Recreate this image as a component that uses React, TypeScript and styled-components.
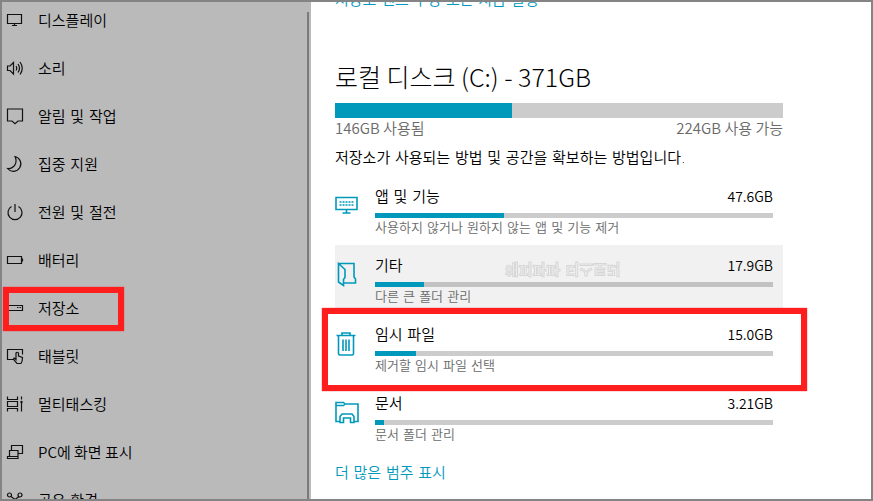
import React from "react";
import styled, { createGlobalStyle } from "styled-components";

const accent = "#0099bc";
const latin = `"Noto Sans CJK KR", sans-serif`;
const hangul = `"DejaVu Sans", "Noto Sans CJK KR", sans-serif`;

const GlobalStyle = createGlobalStyle`
  * { box-sizing: border-box; }
  body {
    margin: 0;
    background: #fff;
    color: #000;
    font: 350 15px/20px ${hangul};
  }
`;

const Frame = styled.div`
  display: flex;
  height: 100vh;
  border: 2px solid #848484;
  overflow: hidden;
`;

const Sidebar = styled.nav`
  display: flex;
  flex: 0 0 309px;
  background: #bababa;
  overflow: hidden;
`;

const NavList = styled.ul`
  flex: 1;
  margin: -6px 0 0;
  padding: 0;
  list-style: none;
`;

const NavItem = styled.li`
  position: relative;
`;

const NavLink = styled.a`
  display: flex;
  align-items: center;
  gap: 14px;
  height: 48px;
  padding-left: 4px;
  color: #000;
  text-decoration: none;
`;

const NavLabel = styled.span<{ $latin?: boolean }>`
  padding-top: ${(p) => (p.$latin ? 0 : 2)}px;
  font-family: ${(p) => (p.$latin ? latin : hangul)};
`;

const Scrollbar = styled.div`
  flex: 0 0 2px;
  margin: 10px 2px 0 0;
  background: #7a7a7a;
`;

const NavIcon = styled.svg`
  width: 18px;
  height: 18px;
  fill: none;
  stroke: #111;
  stroke-width: 1.2;
`;

const Highlight = styled.div`
  position: absolute;
  border: 6px solid #ff1e1e;
  box-shadow: 0 0 1px #ff1e1e;
  pointer-events: none;
`;

const NavHighlight = styled(Highlight)`
  top: 3px;
  left: 1px;
  width: 121px;
  height: 44px;
`;

const RowHighlight = styled(Highlight)`
  inset: -6px -24px -8px -13px;
`;

const Main = styled.main`
  flex: 1;
  min-width: 0;
  padding: 0 88px 0 24px;
  background: #fff;
  overflow: hidden;
`;

const TextLink = styled.a`
  display: block;
  width: fit-content;
  color: ${accent};
  line-height: 20px;
  text-decoration: none;
`;

const TopLink = styled(TextLink)`
  margin-top: -12px;
`;

const Title = styled.h1`
  margin: 48px 0 0;
  font-family: ${latin};
  font-size: 25px;
  font-weight: 300;
  line-height: 36px;
`;

const Bar = styled.div<{ $size: number; $dark?: boolean }>`
  height: ${(p) => p.$size}px;
  background: ${(p) => (p.$dark ? "#c2c2c2" : "#ccc")};
`;

const Fill = styled.div`
  height: 100%;
  background: ${accent};
`;

const DiskBar = styled(Bar)`
  margin-top: 9px;
`;

const Legend = styled.div`
  display: flex;
  justify-content: space-between;
  color: #6a6a6a;
  font-family: ${latin};
`;

const Description = styled.p`
  margin: 10px 0 8px;
`;

const Categories = styled.ul`
  margin: 0;
  padding: 0;
  list-style: none;
`;

const Category = styled.li<{ $active?: boolean }>`
  position: relative;
  display: grid;
  grid-template-columns: 24px 1fr;
  column-gap: 16px;
  height: 69px;
  padding: 10px 10px 0 0;
  background: ${(p) => (p.$active ? "#f1f1f1" : "transparent")};
`;

const CategoryIcon = styled.svg`
  width: 24px;
  height: 26px;
  margin-top: 6px;
  fill: none;
  stroke: ${accent};
  stroke-width: 1.6;
`;

const CategoryHead = styled.div`
  display: flex;
  justify-content: space-between;
  margin-bottom: 5px;
`;

const CategoryName = styled.span`
  line-height: 22px;
`;

const Size = styled.span`
  font-family: ${latin};
  font-size: 14px;
`;

const Hint = styled.div`
  color: #6a6a6a;
  font-size: 13px;
  line-height: 20px;
`;

const Watermark = styled.span`
  position: absolute;
  top: 14px;
  left: 170px;
  color: #f1f1f1;
  font-weight: 700;
  -webkit-text-stroke: 1px #d6d6d6;
  transform: rotateX(180deg);
`;

const MoreLink = styled(TextLink)`
  margin-top: 11px;
`;

const navItems = [
  { label: "디스플레이", icon: <path d="M1.5 3.5h14v9h-14zM8.5 12.5v2M6 14.5h5" /> },
  { label: "소리", icon: <path d="M1.5 7v4.5H4L7.5 15V3.5L4 7zM10 7q1.5 2.2 0 4.5M12 5q3 4.2 0 8.5M14 3q4.5 6.2 0 12.5" /> },
  { label: "알림 및 작업", icon: <path d="M1.5 2h15v12H12l-3 2.7L6 14H1.5z" /> },
  { label: "집중 지원", icon: <path d="M9 1.5a7.5 7.5 0 1 1-7.5 12C8 14 12 8 9 1.5z" /> },
  { label: "전원 및 절전", icon: <path d="M9 1v8M5.5 3.5a7 7 0 1 0 7 0" /> },
  { label: "배터리", icon: <path d="M1.5 5.5h14v7h-14zM16.5 7.5v3" /> },
  { label: "저장소", icon: <path d="M1.5 6.5h15v5h-15zM11 8.5h1.5M13.5 8.5H15" />, marked: true },
  {
    label: "태블릿",
    icon: <path d="M7.5 12.5h-6v-10h15v5M10 12.5l-1.5-1.5q-1.5 0-.5 2l3 3.5h4q1.5-2 1.5-6l-4-1.5V6q-1.2-1.5-2.5 0z" />,
  },
  {
    label: "멀티태스킹",
    icon: (
      <>
        <path d="M1.5 1.5v3h10v-3M1.5 16.5v-3h10v3M1.5 6.5v5h10v-5zM15.5 1.5v3M15.5 8v8.5" />
        <circle cx="15.5" cy="7" r="1.2" fill="#111" stroke="none" />
      </>
    ),
  },
  {
    label: "PC에 화면 표시",
    latin: true,
    icon: <path d="M5.5 7.5v-5h11v8H12M3.5 13.5v-6H12v6zM1.5 13.5h10.5v2h-10.5z" />,
  },
  {
    label: "공유 환경",
    icon: (
      <>
        <circle cx="3.5" cy="4" r="2" />
        <circle cx="14" cy="4" r="2" />
        <path d="M5 5.5l4 3 4-3M9 8.5L4 13" />
      </>
    ),
  },
];

const categories = [
  {
    name: "앱 및 기능",
    size: "47.6GB",
    used: 32.4,
    hint: "사용하지 않거나 원하지 않는 앱 및 기능 제거",
    icon: (
      <>
        <path d="M1 5.5h21v12H1zM11.500 17.500v3M7.500 21h8" />
        <path d="M4.500 10h14M4.500 13h14" strokeDasharray="2 1" />
      </>
    ),
  },
  {
    name: "기타",
    size: "17.9GB",
    used: 12.3,
    hint: "다른 큰 폴더 관리",
    icon: <path d="M3.5 2.5h15.500v13.500l1.500 2v4H9M3.500 2.500v18.500l5 3.500V18.500l1.500-2V8.500L3.500 2.500z" />,
  },
  {
    name: "임시 파일",
    size: "15.0GB",
    used: 10.3,
    hint: "제거할 임시 파일 선택",
    icon: <path d="M1.5 5.500h19M7 5.500V3h8v2.500M3.500 5.500v18q0 1.500 1.500 1.500h12q1.500 0 1.500-1.500V5.500M8 9.500v11.500M11 9.500v11.500M14 9.500v11.500" />,
  },
  {
    name: "문서",
    size: "3.21GB",
    used: 2.3,
    hint: "문서 폴더 관리",
    icon: (
      <path d="M5 22.5H1V3.500h7.500l1.500 1.500h13v17.500H19M1 6.500h7.500L10 5M5 23.500v-6l2-2.500h10l2 2.500v6h-3.500V19h-7v4.500z" />
    ),
  },
];

export default function App() {
  return (
    <>
      <GlobalStyle />
      <Frame>
        <Sidebar>
          <NavList>
            {navItems.map((item) => (
              <NavItem key={item.label}>
                <NavLink href="#">
                  <NavIcon viewBox="0 0 18 18" aria-hidden="true">{item.icon}</NavIcon>
                  <NavLabel $latin={item.latin}>{item.label}</NavLabel>
                </NavLink>
                {item.marked && <NavHighlight />}
              </NavItem>
            ))}
          </NavList>
          <Scrollbar />
        </Sidebar>
        <Main>
          <TopLink href="#">저장소 센스 구성 또는 지금 실행</TopLink>
          <Title>로컬 디스크 (C:) - 371GB</Title>
          <DiskBar $size={15}>
            <Fill style={{ width: "39.5%" }} />
          </DiskBar>
          <Legend>
            <span>146GB 사용됨</span>
            <span>224GB 사용 가능</span>
          </Legend>
          <Description>저장소가 사용되는 방법 및 공간을 확보하는 방법입니다.</Description>
          <Categories>
            {categories.map((c, i) => (
              <Category key={c.name} $active={i === 1}>
                <CategoryIcon viewBox="0 0 24 26" aria-hidden="true">{c.icon}</CategoryIcon>
                <div>
                  <CategoryHead>
                    <CategoryName>{c.name}</CategoryName>
                    <Size>{c.size}</Size>
                  </CategoryHead>
                  <Bar $size={5} $dark={i === 1}>
                    <Fill style={{ width: `${c.used}%` }} />
                  </Bar>
                  <Hint>{c.hint}</Hint>
                </div>
                {i === 1 && <Watermark>해피파파 티스토리</Watermark>}
                {i === 2 && <RowHighlight />}
              </Category>
            ))}
          </Categories>
          <MoreLink href="#">더 많은 범주 표시</MoreLink>
        </Main>
      </Frame>
    </>
  );
}
